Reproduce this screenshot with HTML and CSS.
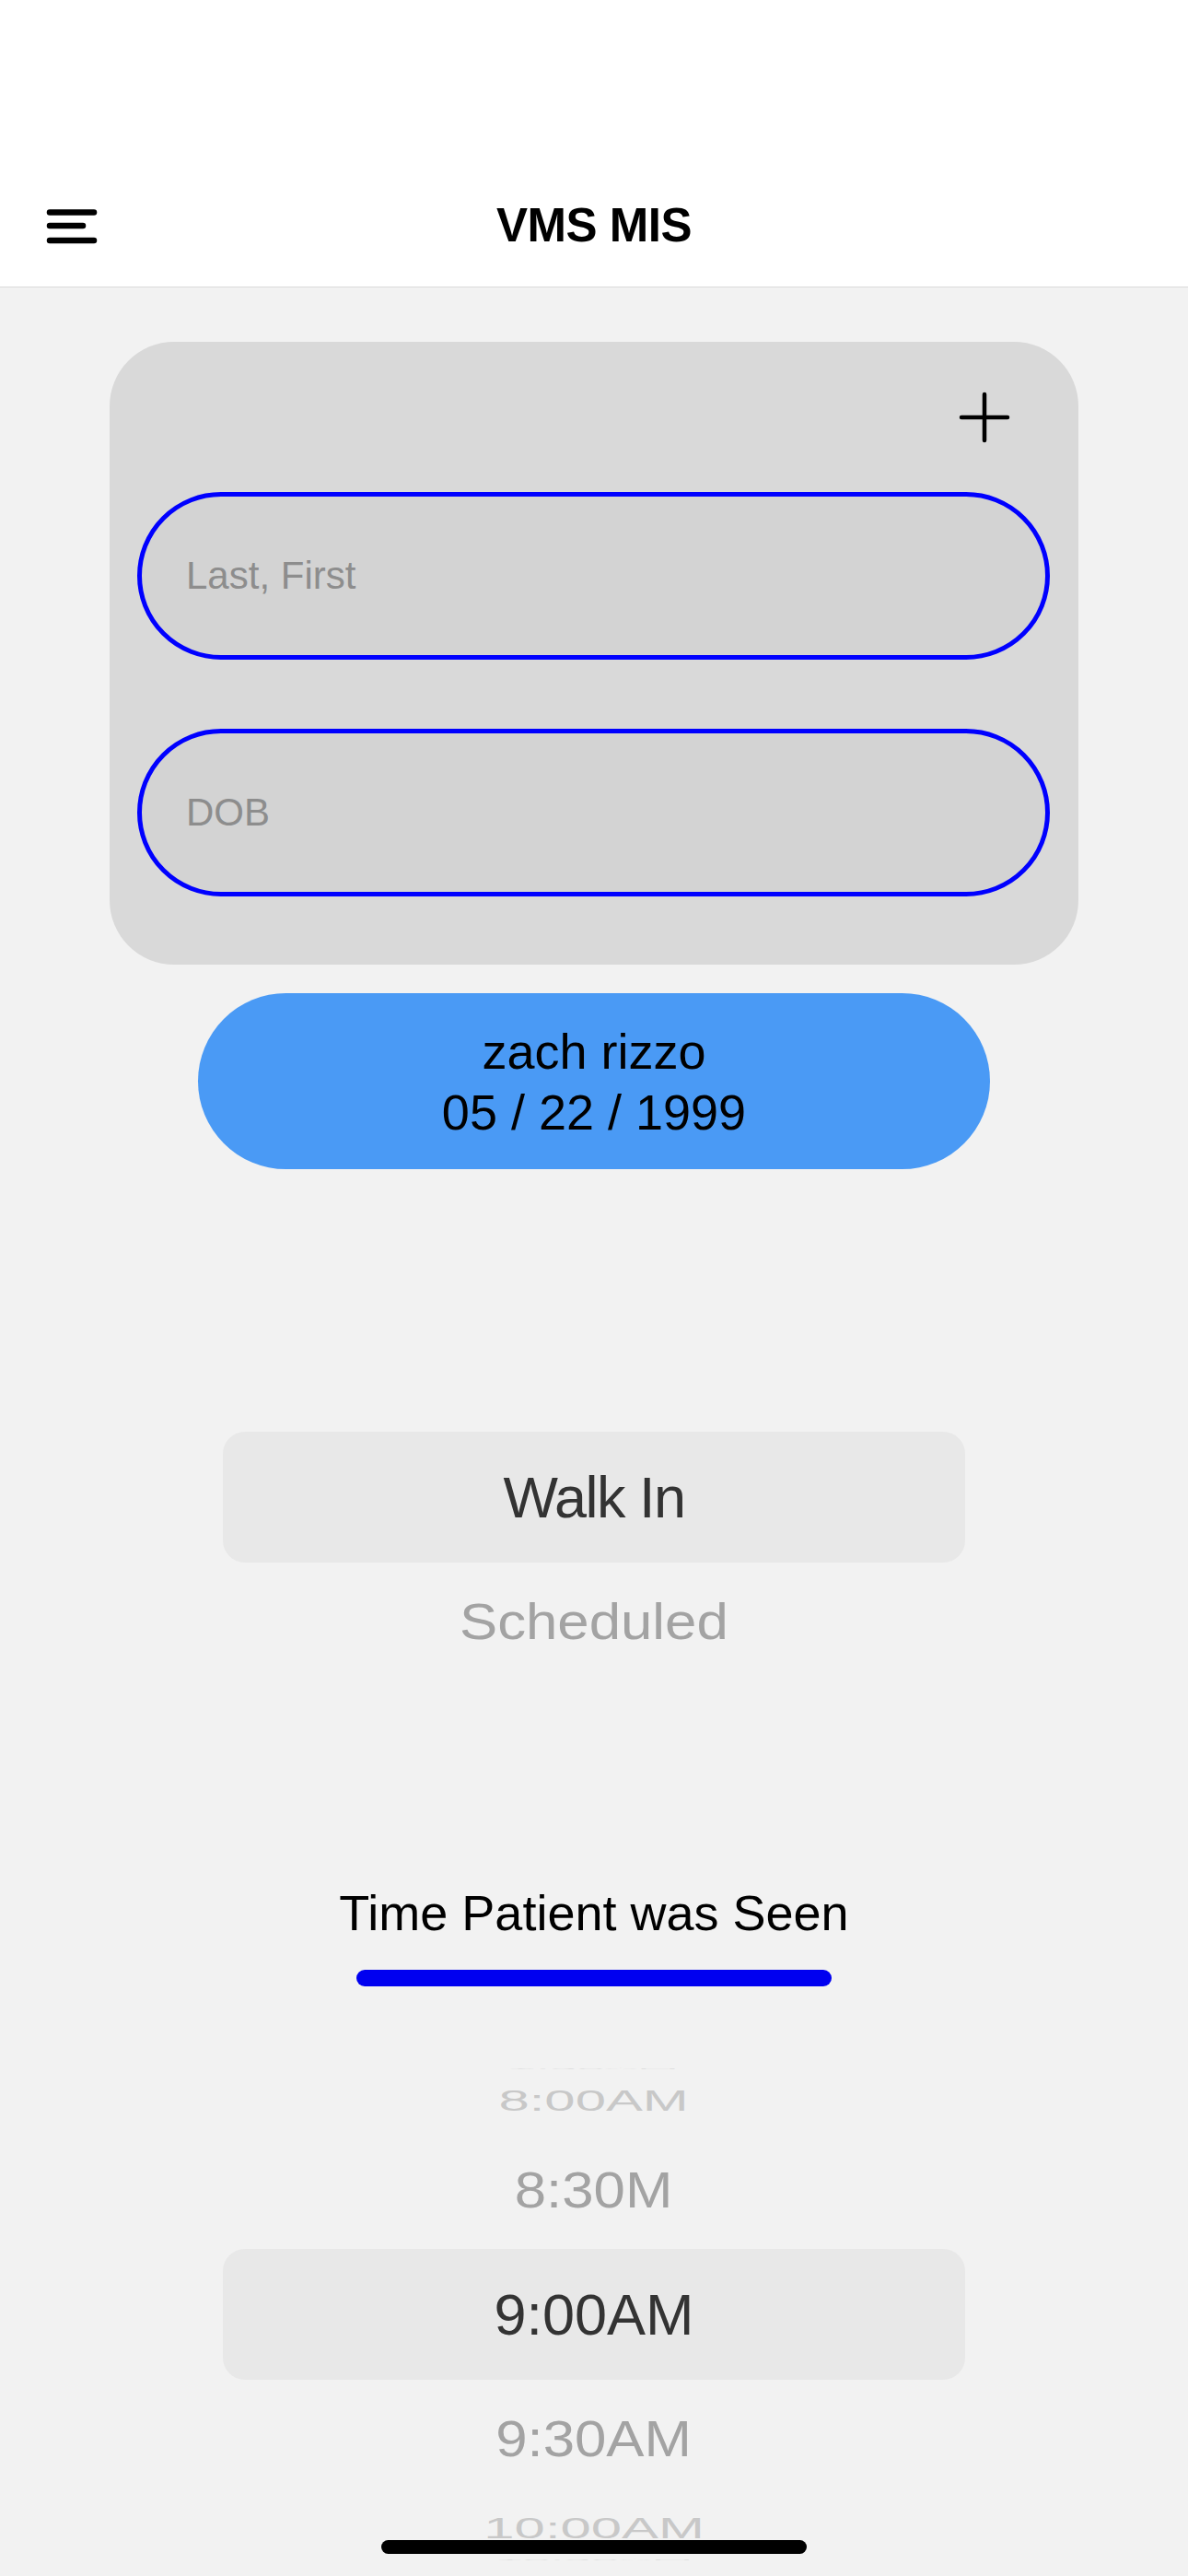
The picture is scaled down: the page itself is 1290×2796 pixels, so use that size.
FILE: index.html
```html
<!DOCTYPE html>
<html lang="en">
<head>
<meta charset="utf-8">
<title>VMS MIS</title>
<link rel="stylesheet" href="styles.css">
</head>
<body>
<header class="topbar">
  <div class="navbar">
    <div class="nav-left">
      <button class="menu-btn" aria-label="Menu">
        <svg width="60" height="44" viewBox="0 0 60 44" aria-hidden="true">
          <g stroke="#000" stroke-width="6.5" stroke-linecap="round">
            <line x1="6" y1="7.5" x2="54" y2="7.5"/>
            <line x1="6" y1="22" x2="42" y2="22"/>
            <line x1="6" y1="38" x2="54" y2="38"/>
          </g>
        </svg>
      </button>
    </div>
    <h1 class="title">VMS MIS</h1>
    <div class="nav-right"></div>
  </div>
</header>
<main class="content">
  <section class="patient-card">
    <div class="card-actions">
      <button class="add-btn" aria-label="Add patient">
        <svg width="56" height="56" viewBox="0 0 56 56" aria-hidden="true">
          <g stroke="#000" stroke-width="4.5" stroke-linecap="round">
            <line x1="28" y1="3" x2="28" y2="53"/>
            <line x1="3" y1="28" x2="53" y2="28"/>
          </g>
        </svg>
      </button>
    </div>
    <input class="field" type="text" placeholder="Last, First">
    <input class="field field-gap" type="text" placeholder="DOB">
  </section>

  <div class="patient-pill">
    <span>zach rizzo</span>
    <span>05 / 22 / 1999</span>
  </div>

  <div class="wheel wheel-visit">
    <div class="wheel-row selected"><span class="tight">Walk In</span></div>
    <div class="wheel-row near"><span>Scheduled</span></div>
  </div>

  <h2 class="section-label">Time Patient was Seen</h2>
  <div class="underline"></div>

  <div class="wheel wheel-time">
    <div class="wheel-row edge edge-top"><span>7:30AM</span></div>
    <div class="wheel-row far"><span>8:00AM</span></div>
    <div class="wheel-row near"><span>8:30M</span></div>
    <div class="wheel-row selected"><span>9:00AM</span></div>
    <div class="wheel-row near"><span>9:30AM</span></div>
    <div class="wheel-row far"><span>10:00AM</span></div>
    <div class="wheel-row edge edge-bottom"><span>10:30AM</span></div>
  </div>
</main>
<div class="home-indicator"></div>
</body>
</html>
```

FILE: styles.css
```css
* {
  box-sizing: border-box;
}

html, body {
  margin: 0;
  padding: 0;
  height: 2796px;
  overflow: hidden;
}

body {
  background: #f2f2f2;
  font-family: "Liberation Sans", Arial, sans-serif;
  color: #000;
}

.topbar {
  background: #ffffff;
  height: 312px;
  padding-top: 178px;
  border-bottom: 1px solid #dadada;
}

.navbar {
  height: 133px;
  display: grid;
  grid-template-columns: 1fr auto 1fr;
  align-items: center;
}

.nav-left {
  padding-left: 48px;
  display: flex;
  align-items: center;
}

.menu-btn {
  background: none;
  border: 0;
  padding: 0;
  margin: 0;
  display: block;
  line-height: 0;
}

.title {
  margin: 0;
  font-size: 51px;
  font-weight: 700;
  line-height: 60px;
  letter-spacing: -0.5px;
}

.content {
  display: flex;
  flex-direction: column;
}

.patient-card {
  margin: 59px 119px 0;
  height: 676px;
  background: #d9d9d9;
  border-radius: 70px;
  padding: 54px 31px 0 30px;
}

.card-actions {
  display: flex;
  justify-content: flex-end;
  height: 56px;
  padding-right: 43px;
  margin-bottom: 53px;
}

.add-btn {
  background: none;
  border: 0;
  padding: 0;
  margin: 0;
  line-height: 0;
}

.field {
  display: block;
  width: 100%;
  height: 182px;
  border: 5px solid #0000ff;
  border-radius: 91px;
  background: #d3d3d3;
  padding: 0 0 0 48px;
  font-family: "Liberation Sans", Arial, sans-serif;
  font-size: 42px;
  color: #000;
  outline: none;
}

.field::placeholder {
  color: #8d8d8d;
}

.field-gap {
  margin-top: 75px;
}

.patient-pill {
  margin: 31px auto 0;
  width: 860px;
  height: 191px;
  border-radius: 96px;
  background: #4a9af5;
  display: flex;
  flex-direction: column;
  align-items: center;
  justify-content: center;
  font-size: 54px;
  line-height: 66px;
  color: #000;
}

.wheel {
  width: 806px;
  margin: 0 auto;
  overflow: hidden;
  display: flex;
  flex-direction: column;
}

.wheel-visit {
  margin-top: 32px;
  height: 648px;
  padding-top: 253px;
}

.wheel-time {
  margin-top: 31px;
  height: 609px;
}

.wheel-row {
  display: flex;
  align-items: center;
  justify-content: center;
  font-size: 63px;
  flex: none;
}

.wheel-row span {
  display: inline-block;
  line-height: normal;
}

.wheel-row .tight {
  letter-spacing: -1.5px;
}

.wheel-row.selected {
  height: 142px;
  background: #e8e8e8;
  border-radius: 24px;
  color: #333333;
}

.wheel-row.near {
  height: 128px;
  color: #a3a3a3;
}

.wheel-row.near span {
  transform: scale(0.98, 0.87);
}

.wheel-row.far {
  height: 66px;
  color: #c8c8c8;
}

.wheel-row.far span {
  transform: scale(0.95, 0.5);
}

.wheel-row.edge {
  height: 60px;
  color: #dedede;
}

.edge-top {
  align-items: flex-end;
}

.edge-top span {
  transform-origin: 50% 100%;
  transform: scale(0.85, 0.04);
}

.edge-bottom {
  align-items: flex-start;
  height: 20px;
}

.edge-bottom span {
  transform-origin: 50% 0;
  transform: scale(0.85, 0.04);
}

.section-label {
  margin: 94px 0 0;
  text-align: center;
  font-size: 54px;
  font-weight: 400;
  line-height: 66px;
  color: #000;
}

.underline {
  width: 516px;
  height: 18px;
  border-radius: 9px;
  background: #0000f0;
  margin: 29px auto 0;
}

.home-indicator {
  position: fixed;
  left: 50%;
  bottom: 24px;
  width: 462px;
  height: 15px;
  margin-left: -231px;
  border-radius: 8px;
  background: #000;
}
```
